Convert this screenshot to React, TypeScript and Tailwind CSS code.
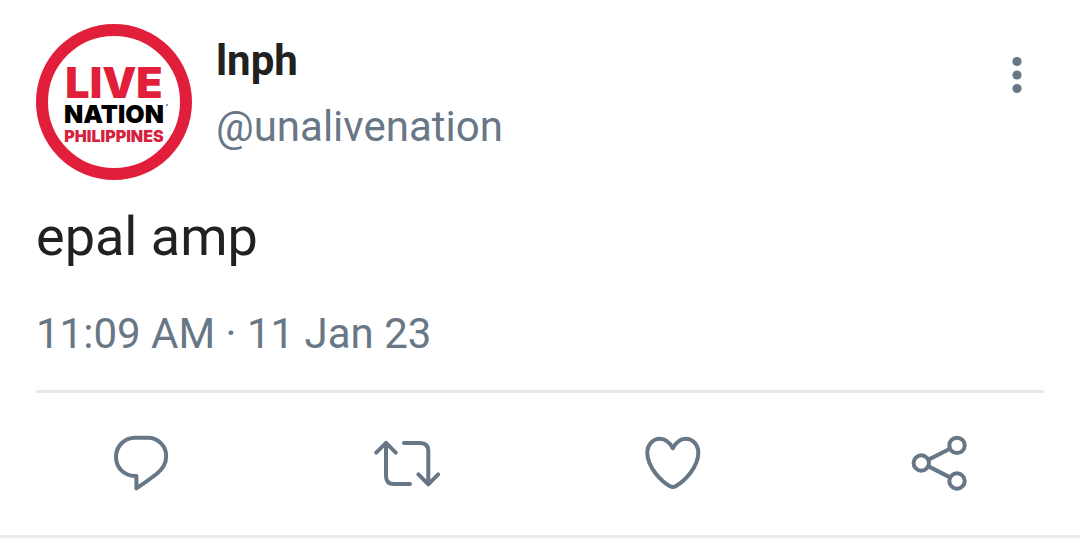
import React from 'react';

interface IconProps {
  children: React.ReactNode;
}

const ActionIcon: React.FC<IconProps> = ({ children }) => (
  <svg
    viewBox="0 0 72 72"
    className="h-[72px] w-[72px]"
    fill="none"
    stroke="currentColor"
    strokeWidth="4"
    strokeLinecap="round"
    strokeLinejoin="round"
    aria-hidden="true"
  >
    {children}
  </svg>
);

const actions = [
  {
    label: 'Reply',
    icon: (
      <path d="M31.4 61.4V49H30C19 49 11 40.5 11 30C11 19 19.5 10.8 30 10.8H43C53 10.8 61.2 19 61.2 29C61.2 36.5 58 42 51.5 47C45 52 38 57 31.4 61.4Z" />
    ),
  },
  {
    label: 'Retweet',
    icon: (
      <>
        <path d="M5.2 25.6L15 15.8L24.8 25.6M15 16.5V49Q15 57 23 57H39" />
        <path d="M33 16H49.3Q57.3 16 57.3 24V56.5M47.4 47.4L57.3 57.3L67.2 47.4" />
      </>
    ),
  },
  {
    label: 'Like',
    icon: (
      <path d="M35.8 21.3C32.5 15 28 11.7 23 11.7C15.5 11.7 10.3 18 10.3 26C10.3 40 24 54 33 59.3Q35.8 60.8 38.6 59.3C47.6 54 61.3 40 61.3 26C61.3 18 56.1 11.7 48.6 11.7C43.6 11.7 39.1 15 35.8 21.3Z" />
    ),
  },
  {
    label: 'Share',
    icon: (
      <>
        <circle cx="18.3" cy="36" r="7.7" />
        <circle cx="54" cy="18.4" r="7.7" />
        <circle cx="54" cy="54" r="7.7" />
        <path d="M25.5 32.6L47 21.8M25.5 39.4L47 50.4" />
      </>
    ),
  },
];

const Avatar: React.FC = () => (
  <div className="flex h-[156px] w-[156px] shrink-0 flex-col items-center rounded-full border-12 border-[#e21f3a] pt-7 font-['Inter',sans-serif] font-black">
    <span className="text-[43px] leading-9 text-[#e21f3a]">LIVE</span>
    <span className="relative text-[25px] leading-7 text-black">
      NATION
      <span className="absolute -right-1 top-1 h-0.5 w-0.5 rounded-full bg-gray-500" />
    </span>
    <span className="text-[16px] leading-4 text-[#d6213f]">PHILIPPINES</span>
  </div>
);

const App: React.FC = () => {
  return (
    <main className="w-full bg-white font-['Roboto',sans-serif] text-[#212121]">
      <article className="border-b-3 border-[#ebebeb] pt-6">
        <header className="flex items-start px-9">
          <Avatar />
          <div className="ml-6 flex-1 pt-[9px]">
            <h1 className="text-[42px] font-bold leading-14">lnph</h1>
            <p className="mt-[10px] text-[42px] leading-14 text-[#687786]">@unalivenation</p>
          </div>
          <button type="button" aria-label="More options" className="mt-7 text-[#687786]">
            <svg viewBox="0 0 54 46" className="h-[46px] w-[54px]" fill="currentColor" aria-hidden="true">
              <circle cx="27" cy="9.5" r="4.6" />
              <circle cx="27" cy="23" r="4.6" />
              <circle cx="27" cy="36.5" r="4.6" />
            </svg>
          </button>
        </header>
        <div className="px-9">
          <p className="mt-[25px] text-[54px] leading-16">epal amp</p>
          <p className="mt-[37px] text-[42px] leading-14 text-[#687786]">
            <time dateTime="2023-01-11T11:09">11:09 AM · 11 Jan 23</time>
          </p>
          <hr className="mt-7 border-t-3 border-[#e8e8e8]" />
        </div>
        <div className="grid grid-cols-4 px-2 pb-9 pt-[34px]">
          {actions.map(({ label, icon }) => (
            <button key={label} type="button" aria-label={label} className="flex justify-center text-[#687786]">
              <ActionIcon>{icon}</ActionIcon>
            </button>
          ))}
        </div>
      </article>
    </main>
  );
};

export default App;
